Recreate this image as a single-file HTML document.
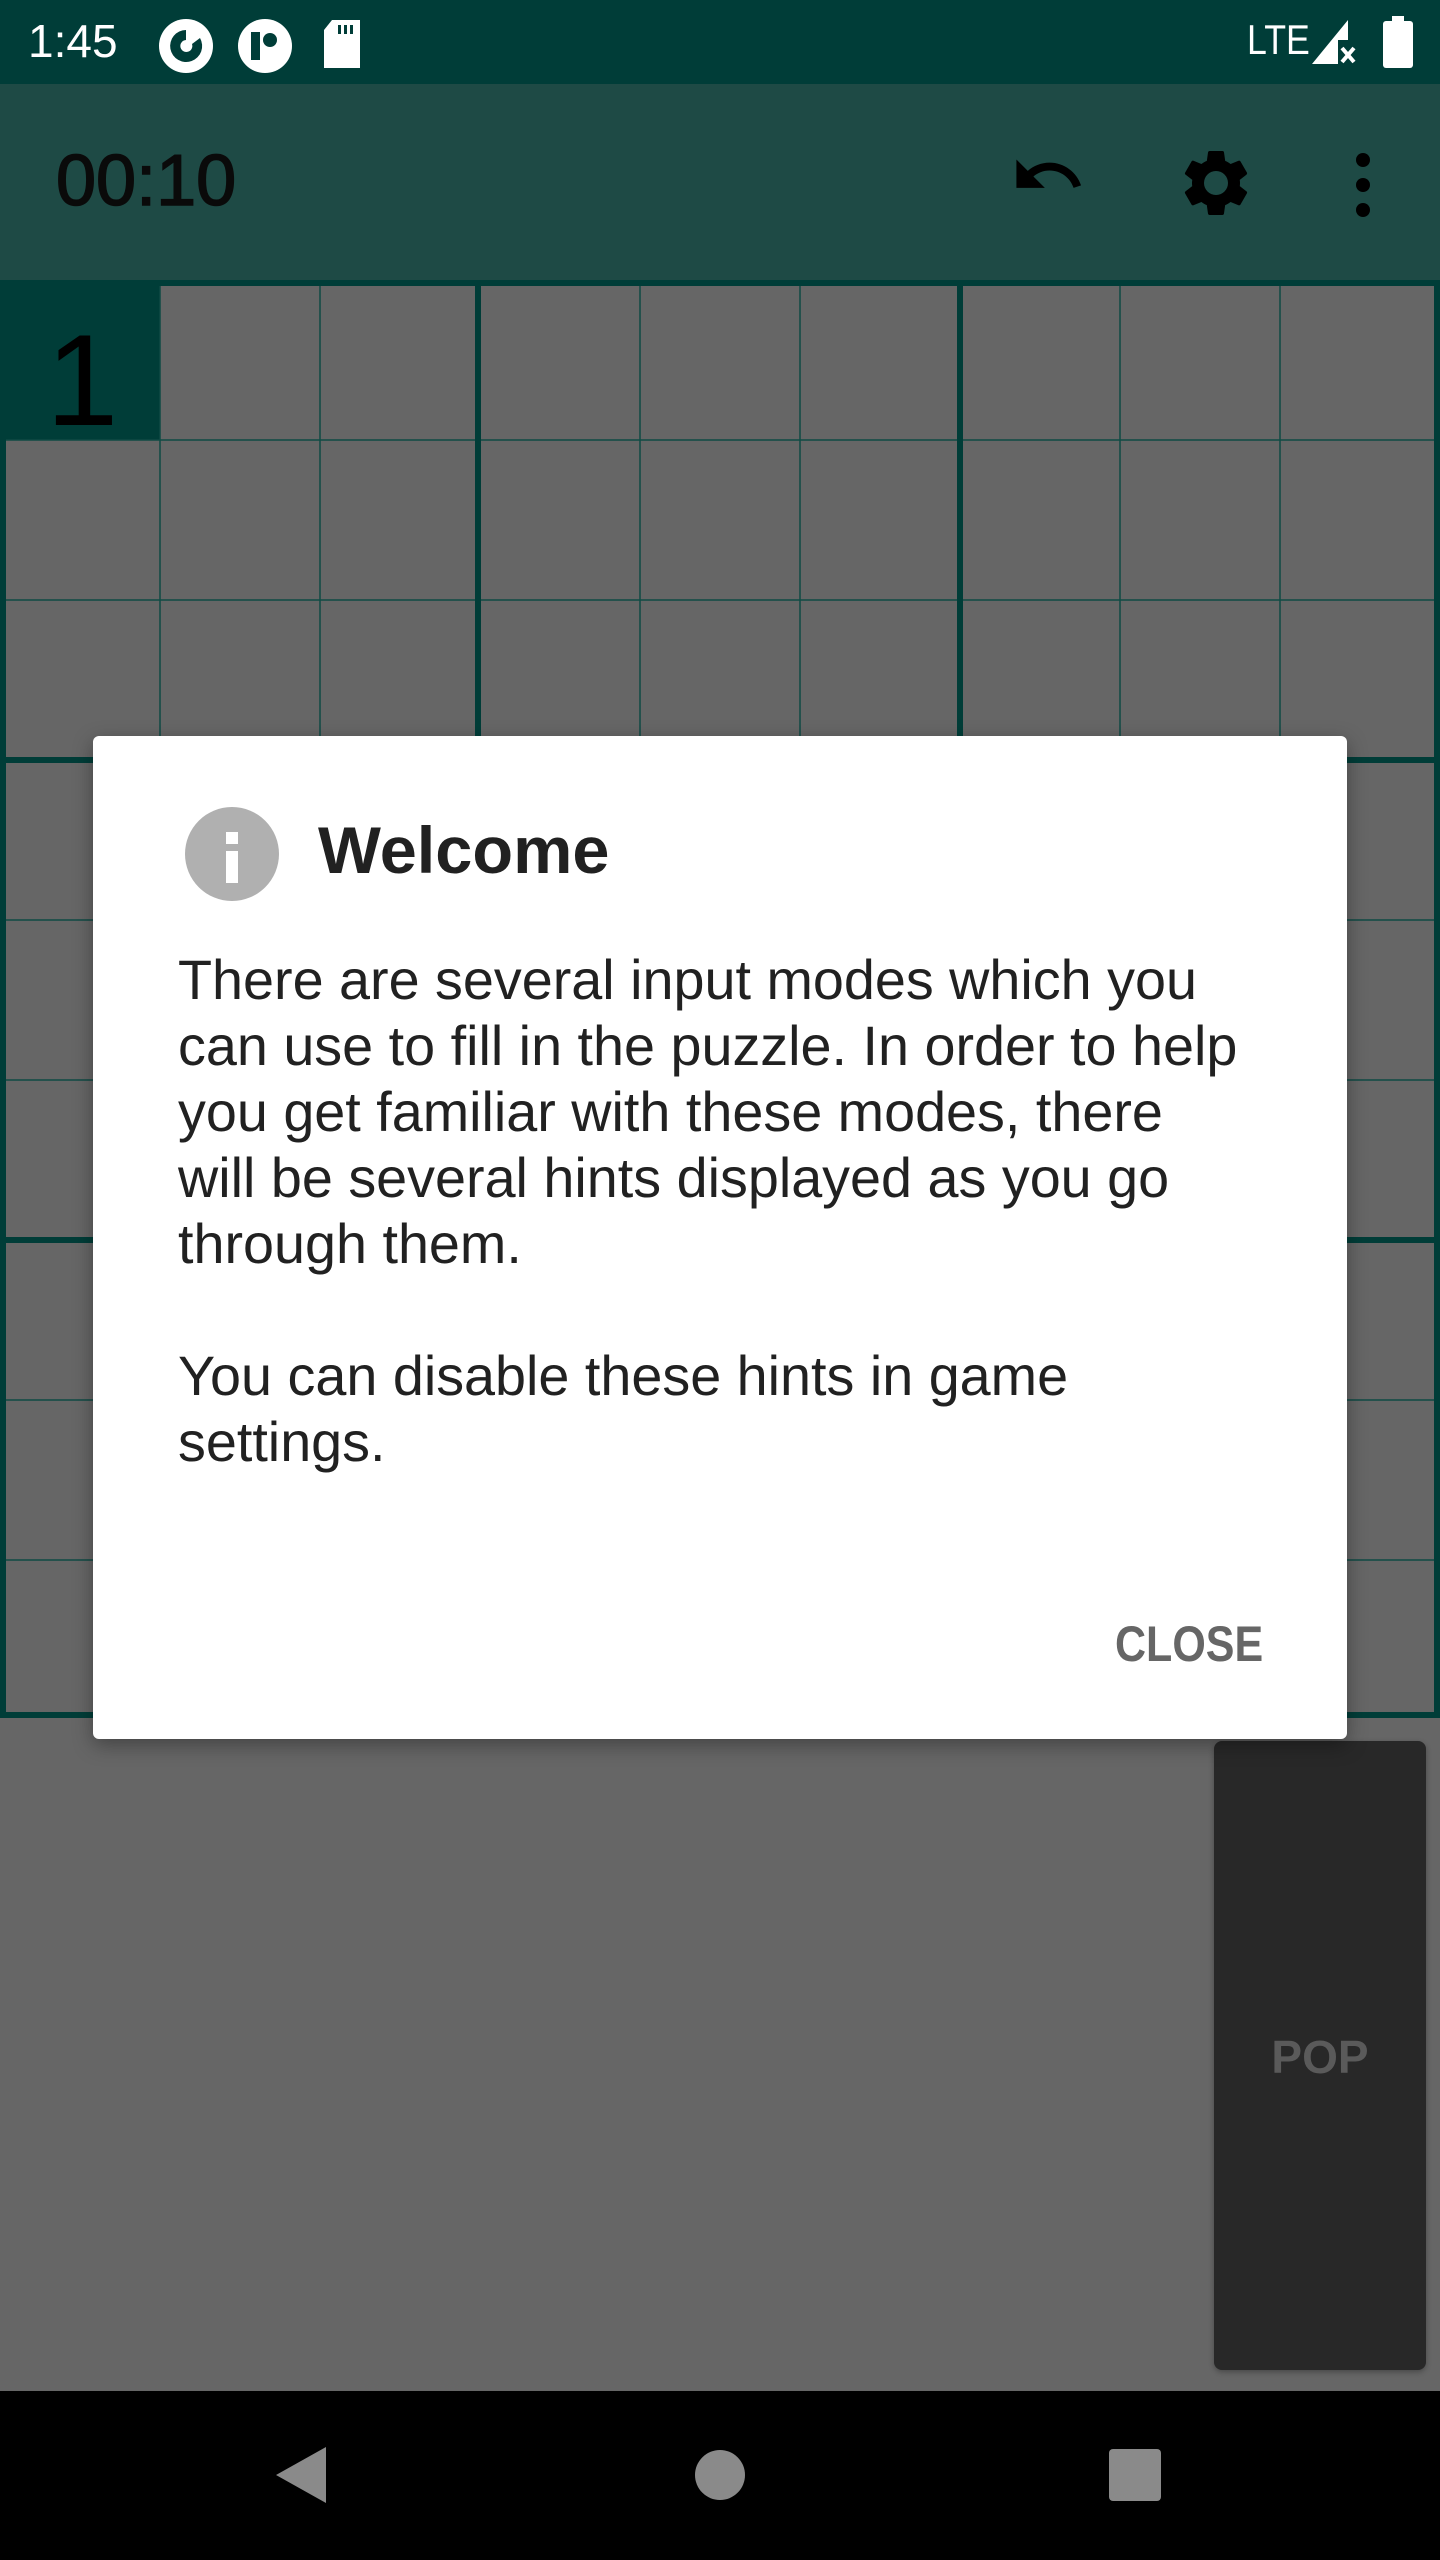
<!DOCTYPE html>
<html><head><meta charset="utf-8"><style>
*{margin:0;padding:0;box-sizing:border-box}
body{width:1440px;height:2560px;position:relative;overflow:hidden;background:#666;font-family:"Liberation Sans",sans-serif}
.abs{position:absolute}
</style></head><body>
<!-- status bar -->
<div class="abs" style="left:0;top:0;width:1440px;height:84px;background:#003d38"></div>
<div class="abs" style="left:28px;top:14px;font-size:46px;color:#fff;transform:scaleX(1.0);transform-origin:left">1:45</div>
<svg class="abs" style="left:158px;top:18px" width="56" height="56" viewBox="0 0 56 56"><circle cx="28" cy="28" r="27" fill="#fff"/><path d="M28 12a16 16 0 1 0 14 8l-8 6a6 6 0 1 1-6-4z" fill="#003d38"/></svg>
<svg class="abs" style="left:237px;top:18px" width="56" height="56" viewBox="0 0 56 56"><circle cx="28" cy="28" r="27" fill="#fff"/><rect x="14" y="14" width="9" height="28" fill="#003d38"/><circle cx="33" cy="22" r="7" fill="#003d38"/></svg>
<svg class="abs" style="left:322px;top:20px" width="40" height="48" viewBox="0 0 40 48"><path d="M10 0h28v48H2V10z" fill="#fff"/><rect x="16" y="5" width="3" height="9" fill="#003d38"/><rect x="22" y="5" width="3" height="9" fill="#003d38"/><rect x="28" y="5" width="3" height="9" fill="#003d38"/></svg>
<div class="abs" style="left:1247px;top:16px;font-size:42px;color:#fff;transform:scaleX(0.85);transform-origin:left">LTE</div>
<svg class="abs" style="left:1312px;top:20px" width="48" height="48" viewBox="0 0 48 48"><path d="M36 0L0 44h26V20h10z" fill="#fff"/><path d="M30 28l12 14M42 28L30 42" stroke="#fff" stroke-width="4"/></svg>
<svg class="abs" style="left:1383px;top:16px" width="30" height="52" viewBox="0 0 30 52"><rect x="9" y="0" width="12" height="6" fill="#fff"/><rect x="0" y="5" width="30" height="47" rx="3" fill="#fff"/></svg>
<!-- toolbar -->
<div class="abs" style="left:0;top:84px;width:1440px;height:196px;background:#1e4a45"></div>
<div class="abs" style="left:56px;top:140px;font-size:72px;color:#0a0a0a;-webkit-text-stroke:1.5px #0a0a0a">00:10</div>
<svg class="abs" style="left:1010px;top:150px" width="76" height="60" viewBox="0 0 24 19"><path d="M12.5 4c-2.650 0-5.05 1-6.9 2.6L2 3v9h9L7.38 8.38C8.77 7.22 10.54 6.5 12.5 6.5c3.54 0 6.55 2.31 7.6 5.5l2.37-.78C21.08 7.03 17.15 4 12.5 4z" fill="#000"/></svg>
<svg class="abs" style="left:1176px;top:143px" width="80" height="80" viewBox="0 0 24 24"><path d="M19.14 12.94c.04-.3.06-.61.06-.94 0-.32-.02-.64-.07-.94l2.03-1.58a.49.49 0 0 0 .12-.61l-1.920-3.32a.49.49 0 0 0-.59-.22l-2.39.96c-.5-.38-1.03-.7-1.62-.94l-.36-2.54a.48.48 0 0 0-.48-.41h-3.84c-.24 0-.43.17-.47.41l-.36 2.54c-.59.24-1.130.57-1.62.94l-2.39-.96c-.22-.08-.47 0-.59.22L2.74 8.87c-.12.21-.08.47.12.61l2.03 1.58c-.05.3-.09.63-.09.94s.02.64.07.94l-2.03 1.58a.49.49 0 0 0-.12.61l1.92 3.32c.12.22.37.29.59.22l2.39-.96c.5.38 1.03.7 1.62.94l.36 2.54c.05.24.24.41.48.41h3.84c.24 0 .44-.17.47-.41l.36-2.54c.59-.24 1.13-.56 1.62-.94l2.39.96c.22.08.47 0 .59-.22l1.92-3.32c.12-.22.07-.47-.12-.61l-2.01-1.58zM12 15.6A3.6 3.6 0 1 1 12 8.4a3.6 3.6 0 0 1 0 7.2z" fill="#000"/></svg>
<svg class="abs" style="left:1350px;top:150px" width="26" height="70" viewBox="0 0 26 70"><circle cx="13" cy="10" r="7" fill="#000"/><circle cx="13" cy="35" r="7" fill="#000"/><circle cx="13" cy="60" r="7" fill="#000"/></svg>
<!-- grid -->
<svg class="abs" style="left:0;top:280px" width="1440" height="1440" viewBox="0 0 1440 1440">
<rect x="0" y="0" width="1440" height="1438" fill="#666"/>
<rect x="0" y="0" width="160" height="160" fill="#003d38"/>
<g stroke="#0f4a44" stroke-width="1.5">
<line x1="160" y1="0" x2="160" y2="1438"/><line x1="320" y1="0" x2="320" y2="1438"/>
<line x1="640" y1="0" x2="640" y2="1438"/><line x1="800" y1="0" x2="800" y2="1438"/>
<line x1="1120" y1="0" x2="1120" y2="1438"/><line x1="1280" y1="0" x2="1280" y2="1438"/>
<line x1="0" y1="160" x2="1440" y2="160"/><line x1="0" y1="320" x2="1440" y2="320"/>
<line x1="0" y1="640" x2="1440" y2="640"/><line x1="0" y1="800" x2="1440" y2="800"/>
<line x1="0" y1="1120" x2="1440" y2="1120"/><line x1="0" y1="1280" x2="1440" y2="1280"/>
</g>
<g stroke="#003d38" stroke-width="6">
<line x1="478" y1="0" x2="478" y2="1438"/><line x1="960" y1="0" x2="960" y2="1438"/>
<line x1="0" y1="480" x2="1440" y2="480"/><line x1="0" y1="960" x2="1440" y2="960"/>
<line x1="0" y1="1435" x2="1440" y2="1435"/>
<line x1="0" y1="3" x2="1440" y2="3"/>
<line x1="3" y1="0" x2="3" y2="1438"/><line x1="1437" y1="0" x2="1437" y2="1438"/>
</g>
<text x="46" y="145" font-family="Liberation Sans" font-size="130" fill="#000">1</text>
</svg>
<!-- POP -->
<div class="abs" style="left:1214px;top:1741px;width:212px;height:629px;background:#282828;border-radius:8px;box-shadow:0 2px 6px rgba(0,0,0,.3)"></div>
<div class="abs" style="left:1214px;top:2030px;width:212px;text-align:center;font-size:46px;font-weight:bold;color:#5a5a5a">POP</div>
<!-- nav -->
<div class="abs" style="left:0;top:2391px;width:1440px;height:169px;background:#000"></div>
<svg class="abs" style="left:270px;top:2445px" width="60" height="60" viewBox="0 0 60 60"><path d="M56 2L56 58L6 30Z" fill="#8a8a8a"/></svg>
<div class="abs" style="left:695px;top:2450px;width:50px;height:50px;border-radius:50%;background:#8a8a8a"></div>
<div class="abs" style="left:1109px;top:2449px;width:52px;height:52px;border-radius:4px;background:#8a8a8a"></div>
<!-- dialog -->
<div class="abs" style="left:93px;top:736px;width:1254px;height:1003px;background:#fff;border-radius:6px;box-shadow:0 6px 20px rgba(0,0,0,.35)"></div>
<div class="abs" style="left:185px;top:807px;width:94px;height:94px;border-radius:50%;background:#b0b0b0"></div>
<div class="abs" style="left:226px;top:832px;width:12px;height:12px;background:#fff"></div>
<div class="abs" style="left:226px;top:851px;width:12px;height:32px;background:#fff"></div>
<div class="abs" style="left:318px;top:812px;font-size:66px;font-weight:bold;color:#212121;transform:scaleX(1.01);transform-origin:left">Welcome</div>
<div class="abs" style="left:178px;top:947px;font-size:56px;line-height:66px;color:#212121;white-space:nowrap;transform:scaleX(0.995);transform-origin:left">There are several input modes which you<br>can use to fill in the puzzle. In order to help<br>you get familiar with these modes, there<br>will be several hints displayed as you go<br>through them.<br><br>You can disable these hints in game<br>settings.</div>
<div class="abs" style="left:1115px;top:1615px;font-size:50px;font-weight:bold;color:#666;transform:scaleX(0.86);transform-origin:left">CLOSE</div>
</body></html>
